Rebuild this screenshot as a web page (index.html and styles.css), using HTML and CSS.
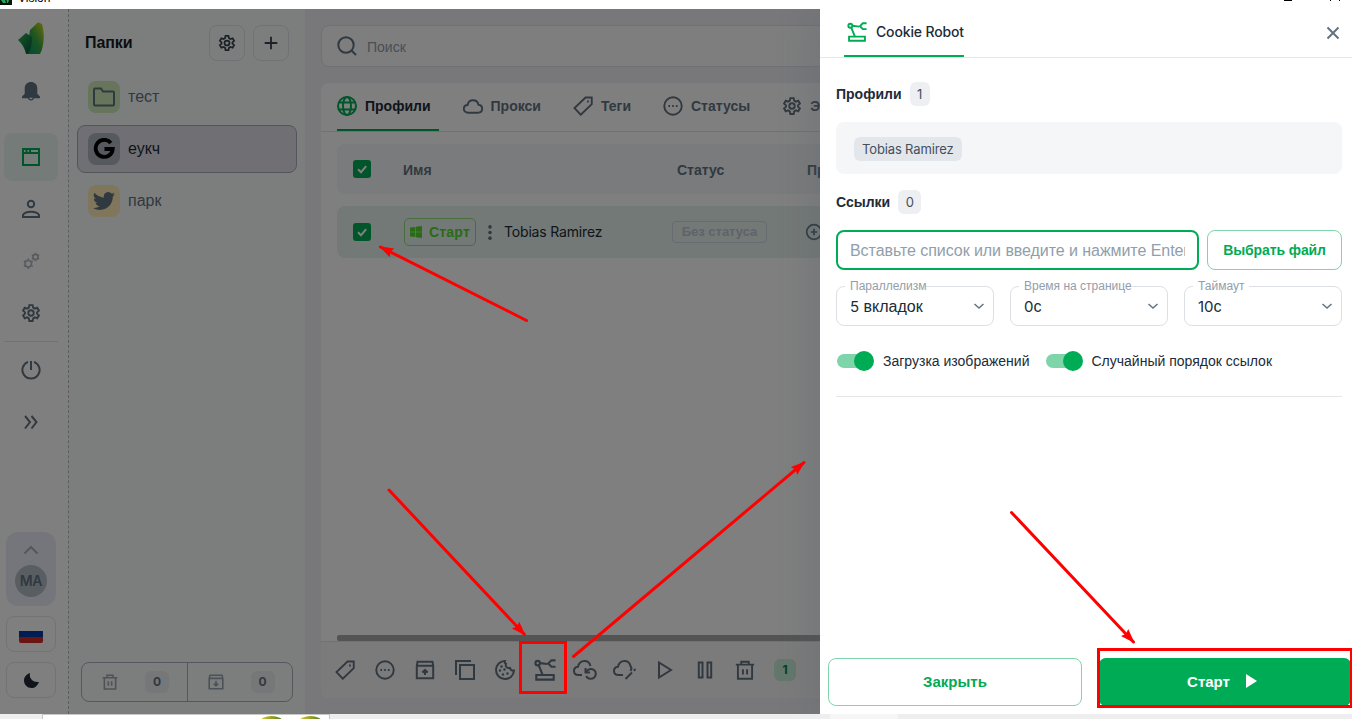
FILE: index.html
```html
<!DOCTYPE html>
<html lang="ru">
<head>
    <meta charset="UTF-8">
    <meta name="viewport" content="width=device-width, initial-scale=1.0">
    <title>Vision</title>
    <link rel="stylesheet" href="styles.css">
</head>
<body>

<svg class="sprite" xmlns="http://www.w3.org/2000/svg">
    <symbol id="gear" viewBox="0 0 24 24"><path d="M10 2.500h4l.6 3 2 1.200 2.900-1 2 3.500-2.300 2v1.600l2.300 2-2 3.500-2.900-1-2 1.200-.6 3h-4l-.6-3-2-1.200-2.900 1-2-3.500 2.300-2v-1.600l-2.300-2 2-3.500 2.900 1 2-1.200z"/><circle cx="12" cy="12" r="3.300"/></symbol>
    <symbol id="dots" viewBox="0 0 24 24"><circle cx="12" cy="12" r="10.500"/><path d="M6.500 12h2M11 12h2M15.500 12h2"/></symbol>
    <symbol id="tag" viewBox="0 0 24 24"><path d="M22.500 1.800h-7.500L1.800 14.500l7.500 8 13.200-12.700z"/><path d="M16.800 6.500h2.200"/></symbol>
    <symbol id="cloud" viewBox="0 0 24 24"><path d="M6.500 20C3 20 1 18 1 15.300c0-2.500 2-4.300 4.500-4.500C6 7.300 8.700 5 12 5c3.500 0 6 2.300 6.500 5.500 2.700.3 4.500 2.200 4.500 4.700 0 2.800-2.100 4.800-5 4.800z"/></symbol>
    <symbol id="robot" viewBox="0 0 24 24"><path d="M2.500 17.500h19v5h-19zM5 6.500l4.500 11M6.500 4.500l8 1M23.500 1.500h-4.500l-3.500 3.500 3.500 3.500h4.500"/><circle cx="4" cy="4.500" r="2.400"/></symbol>
    <symbol id="trash" viewBox="0 0 24 24"><path d="M1 5.500h22M7.500 5V2h9v3M3.500 5.500v17h17v-17M9.500 11v6.500M14.500 11v6.500"/></symbol>
    <symbol id="check" viewBox="0 0 18 18"><path d="M5 9.200l3 3 5.200-6"/></symbol>
    <symbol id="down" viewBox="0 0 12 12"><path d="M1.500 4L6 8l4.500-4"/></symbol>
</svg>

<header class="titlebar">
    <svg class="app-icon" viewBox="0 0 12 12"><rect width="12" height="12" fill="#0b130d"/><path d="M1 7h4l1 3H3zM6 5h3v2L8 10H7z" fill="#22ab5c"/></svg>
    <span class="app-name">Vision</span>
    <span class="win-min"></span>
    <span class="win-close"></span>
</header>

<div class="window">
    <nav class="sidebar">
        <svg class="logo" viewBox="0 0 26 33">
            <defs>
                <linearGradient id="g1" x1="0" y1="1" x2="1" y2="0"><stop offset="0" stop-color="#009078"/><stop offset=".5" stop-color="#36a843"/><stop offset="1" stop-color="#d8d81c"/></linearGradient>
                <linearGradient id="g2" x1="0" y1="0" x2="1" y2="1"><stop offset="0" stop-color="#30b050"/><stop offset="1" stop-color="#00563a"/></linearGradient>
            </defs>
            <path d="M12 8L20 .3 24 2c3 10 2 23-2 30H8z" fill="url(#g1)"/>
            <path d="M0 18l8-7 6 4c0 7-1 12-4 17H8C7 27 5 23 0 18z" fill="url(#g2)"/>
        </svg>
        <div class="nav-item bell">
            <svg class="icon solid" viewBox="0 0 20 22"><path d="M10 1c4 0 7 2.700 7 7v6l3 3v2H0v-2l3-3V8c0-4.300 3-7 7-7z"/><path d="M6.500 18a3.500 3.500 0 007 0z"/><path class="hole" d="M8.200 18.500a1.800 1.800 0 003.600 0z"/></svg>
        </div>
        <div class="nav-item active">
            <svg class="icon" viewBox="0 0 20 20"><path d="M2 2h16v16H2zM2 6h16M5.500 2v4M9 2v4"/></svg>
        </div>
        <div class="nav-item">
            <svg class="icon" viewBox="0 0 20 20"><circle cx="10" cy="5" r="3.200"/><path d="M2 18v-2c2-4.500 14-4.500 16 0v2z"/></svg>
        </div>
        <div class="nav-item faded">
            <svg class="icon pair" viewBox="0 0 20 20"><circle cx="7" cy="13" r="3.600"/><circle cx="15" cy="5.500" r="2.800"/><path d="M7 7.200v2.200M7 16.600v2.200M2 10l2 1.200M10 14.800l2 1.200M2 16l2-1.200M10 11.200l2-1.200M15 .8v1.900M15 8.300v1.900M11 3.200l1.600.9M17.400 6.900l1.600.9M11 7.800l1.600-.9M17.400 4.100l1.600-.9"/></svg>
        </div>
        <div class="nav-item"><svg class="icon sym"><use href="#gear"/></svg></div>
        <div class="nav-line"></div>
        <div class="nav-item">
            <svg class="icon" viewBox="0 0 20 20"><path d="M7 1.900a8.600 8.600 0 106 0M10 1v9"/></svg>
        </div>
        <div class="nav-item">
            <svg class="icon" viewBox="0 0 20 20"><path d="M4 4l5 6-5 6.500M10.500 4l5 6-5 6.500"/></svg>
        </div>
        <div class="nav-bottom">
            <div class="user">
                <svg viewBox="0 0 16 10"><path d="M1.500 8.500L8 2l6.500 6.500"/></svg>
                <div class="avatar">MA</div>
            </div>
            <div class="square"><div class="flag"></div></div>
            <div class="square"><svg class="moon" viewBox="0 0 16 16"><path d="M6.500 0C5 5 9 10.500 16 9.500 14.500 13.500 11.500 16 8 16c-4.500 0-8-3.500-8-8 0-3.600 2.500-6.800 6.500-8z"/></svg></div>
        </div>
    </nav>

    <aside class="folders">
        <div class="folders-head">
            <h2>Папки</h2>
            <button class="icon-btn"><svg class="icon sym dark"><use href="#gear"/></svg></button>
            <button class="icon-btn"><svg class="icon dark" viewBox="0 0 20 20"><path d="M10 3v14M3 10h14"/></svg></button>
        </div>
        <div class="folder">
            <span class="folder-icon lime"><svg class="icon" viewBox="0 0 24 24"><path d="M2 19.500v-15q0-1 1-1h6l2 3h10q1 0 1 1v12q0 1-1 1H3q-1 0-1-1z"/></svg></span>
            тест
        </div>
        <div class="folder selected">
            <span class="folder-icon steel"><svg class="google" viewBox="0 0 24 24"><path d="M19.500 5.500A9.300 9.300 0 1021.500 12H12.500"/></svg></span>
            еукч
        </div>
        <div class="folder">
            <span class="folder-icon sand"><svg class="bird" viewBox="0 0 24 24"><path d="M24 4.600a10 10 0 01-2.800.8 4.900 4.900 0 002.200-2.700c-1 .6-2 1-3.100 1.200a4.900 4.900 0 00-8.400 4.500C7.700 8.100 4.100 6.100 1.700 3.100a4.900 4.900 0 001.500 6.600c-.8 0-1.600-.2-2.200-.6v.1a4.900 4.900 0 004 4.800c-.7.200-1.500.2-2.200.1.600 2 2.400 3.400 4.600 3.400A9.900 9.900 0 010 19.500 14 14 0 007.600 21.700c9 0 14-7.500 14-14v-.6A10 10 0 0024 4.600z"/></svg></span>
            парк
        </div>
        <div class="folders-foot">
            <div><svg class="icon sym"><use href="#trash"/></svg><b>0</b></div>
            <div><svg class="icon" viewBox="0 0 20 20"><path d="M2.500 1.500h15l1 4v13h-17v-13zM2 5.500h16M10 8.500v6M7.300 12l2.700 2.700 2.700-2.700"/></svg><b>0</b></div>
        </div>
    </aside>

    <main class="main">
        <div class="search">
            <svg class="icon" viewBox="0 0 20 20"><circle cx="9" cy="9" r="7.700"/><path d="M14.500 14.500l4.500 4.500"/></svg>
            <span>Поиск</span>
        </div>
        <section class="card">
            <div class="tabs">
                <div class="tab current"><svg class="icon" viewBox="0 0 20 20"><circle cx="10" cy="10" r="9"/><ellipse cx="10" cy="10" rx="4" ry="9"/><path d="M2 6.500h16M2 13.500h16"/></svg>Профили</div>
                <div class="tab"><svg class="icon sym"><use href="#cloud"/></svg>Прокси</div>
                <div class="tab"><svg class="icon sym"><use href="#tag"/></svg>Теги</div>
                <div class="tab"><svg class="icon sym"><use href="#dots"/></svg>Статусы</div>
                <div class="tab"><svg class="icon sym"><use href="#gear"/></svg>Экспорт</div>
            </div>
            <div class="table">
                <div class="row head">
                    <span class="checkbox"><svg><use href="#check"/></svg></span>
                    <span class="col-name">Имя</span>
                    <span class="col-status">Статус</span>
                    <span class="col-proxy">Прокси</span>
                </div>
                <div class="row">
                    <span class="checkbox"><svg><use href="#check"/></svg></span>
                    <div class="col-name">
                        <button class="run"><svg viewBox="0 0 12 12"><path d="M0 1.600l5.400-.7v4.800H0zM6 .8L12 0v5.700H6zM0 6.300h5.400v4.800L0 10.400zM6 6.300h6V12l-6-.8z"/></svg>Старт</button>
                        <svg class="kebab" viewBox="0 0 4 16"><circle cx="2" cy="2" r="1.900"/><circle cx="2" cy="8" r="1.900"/><circle cx="2" cy="14" r="1.900"/></svg>
                        <span class="name">Tobias Ramirez</span>
                    </div>
                    <div class="col-status"><span class="no-status">Без статуса</span></div>
                    <div class="col-proxy"><svg class="icon add" viewBox="0 0 16 16"><circle cx="8" cy="8" r="6.500"/><path d="M8 5.200v5.600M5.200 8h5.600"/></svg></div>
                </div>
            </div>
            <div class="scrollbar"></div>
            <div class="toolbar">
                <span><svg class="icon sym"><use href="#tag"/></svg></span>
                <span><svg class="icon sym"><use href="#dots"/></svg></span>
                <span><svg class="icon" viewBox="0 0 20 20"><path d="M2.500 1.800h15l.7 4v12.400H1.800V5.800zM2 5.800h16M10 15v-4.500M7.300 12.500L10 9.800l2.700 2.700"/></svg></span>
                <span><svg class="icon" viewBox="0 0 20 20"><path d="M5 5h14v14H5zM1 15V1h15"/></svg></span>
                <span><svg class="icon" viewBox="0 0 20 20"><path d="M10 1a9 9 0 109 9.500c-2 .5-3.500-.5-4-2.500-3 .5-5-1.500-4-4-1-.5-1.500-1.500-1-3z"/><path class="chips" d="M6.500 6.500v.01M5 10.500v.01M9.500 9.500v.01M8 14.500v.01M12.500 13.500v.01"/></svg></span>
                <span><svg class="icon sym arm"><use href="#robot"/></svg></span>
                <span><svg class="icon wide" viewBox="0 0 24 20"><path d="M9 15H5.500C3 15 1 13.500 1 11s2-4 4-4.200C5.700 3.500 8.200 1 11.500 1c3 0 5.300 2 6 5M12.500 8v4.500h4.500M13 12C14.500 9.500 16.500 8.700 18.500 9c3 .6 4.500 3 4.200 5.500-.4 2.500-2.500 4.500-5.200 4.300-2-.1-3.500-1.200-4.300-2.800"/></svg></span>
                <span><svg class="icon wide" viewBox="0 0 24 20"><path d="M10 15H5.500C3 15 1 13.500 1 11s2-4 4-4.200C5.700 3.500 8.200 1 11.500 1c3.200 0 5.300 2 6 5 1.300 1.500 1 3.500 0 5M12.500 19l6.500-6.500M20.800 10.700l1.700-1.700"/></svg></span>
                <span><svg class="icon" viewBox="0 0 20 20"><path d="M4 2.500v15L16 10z"/></svg></span>
                <span><svg class="icon" viewBox="0 0 20 20"><path d="M3.800 2.500h3.700v15H3.800zM12.500 2.500h3.700v15h-3.700z"/></svg></span>
                <span><svg class="icon sym"><use href="#trash"/></svg></span>
                <b>1</b>
            </div>
        </section>
    </main>

    <div class="backdrop"></div>

    <div class="drawer">
        <div class="drawer-head">
            <div class="drawer-tab"><svg class="icon sym"><use href="#robot"/></svg><span>Cookie Robot</span></div>
            <svg class="icon close" viewBox="0 0 14 14"><path d="M1.500 1.500l11 11M12.500 1.500l-11 11"/></svg>
        </div>
        <div class="drawer-body">
            <h3>Профили <span>1</span></h3>
            <div class="profiles"><span>Tobias Ramirez</span></div>
            <h3>Ссылки <span>0</span></h3>
            <div class="links">
                <div class="input"><span>Вставьте список или введите и нажмите Enter</span></div>
                <button class="file">Выбрать файл</button>
            </div>
            <div class="selects">
                <div class="select"><label class="wide-label">Параллелизм</label><span><i>5</i> вкладок</span><svg class="icon"><use href="#down"/></svg></div>
                <div class="select"><label class="wide-label">Время на странице</label><span><i>0</i>с</span><svg class="icon"><use href="#down"/></svg></div>
                <div class="select"><label>Таймаут</label><span><i>10</i>с</span><svg class="icon"><use href="#down"/></svg></div>
            </div>
            <div class="switches">
                <div class="switch"><span class="track"></span>Загрузка изображений</div>
                <div class="switch"><span class="track"></span>Случайный порядок ссылок</div>
            </div>
        </div>
        <div class="drawer-foot">
            <button class="cancel">Закрыть</button>
            <button class="start">Старт <svg viewBox="0 0 11 14"><path d="M0 0l11 7-11 7z"/></svg></button>
        </div>
    </div>
</div>

<footer class="taskbar">
    <div class="preview"><span></span><span></span></div>
    <div class="task"></div>
</footer>

<!-- step markers -->
<svg class="marks" viewBox="0 0 1352 719">
    <defs>
        <marker id="head" markerUnits="userSpaceOnUse" markerWidth="16" markerHeight="12" refX="13" refY="5" orient="auto"><path d="M0 0l14.500 5L0 10l2-5z"/></marker>
    </defs>
    <path d="M526.500 320.500L380.500 247"/>
    <path d="M389 490L524.500 634.500"/>
    <path d="M573.500 656.500L804 462.500"/>
    <path d="M1011.500 512.500L1133.500 642"/>
    <rect x="520.500" y="642.500" width="45" height="50"/>
    <rect x="1098.500" y="649.500" width="253" height="57"/>
</svg>

</body>
</html>
```
FILE: styles.css
```css
* {
    box-sizing: border-box;
}
body {
    margin: 0;
    width: 1352px;
    height: 719px;
    overflow: hidden;
    background: #fff;
    font-family: "Liberation Sans", Arial, sans-serif;
    font-size: 14px;
    color: #212b36;
}
h2, h3 {
    margin: 0;
}
button {
    font-family: inherit;
    background: none;
    padding: 0;
    display: flex;
    align-items: center;
    justify-content: center;
}
.sprite {
    display: none;
}
.icon {
    width: 20px;
    height: 20px;
    flex-shrink: 0;
    fill: none;
    stroke: #637381;
    stroke-width: 2;
}
/* sprite icons use a 24 unit box */
.sym {
    stroke-width: 2.3;
}

/* title bar */
.titlebar {
    height: 9px;
    display: flex;
    overflow: hidden;
}
.app-icon {
    width: 12px;
    height: 12px;
    margin-top: -7px;
}
.app-name {
    margin: -9px 0 0 6px;
    font-size: 12px;
    line-height: 14px;
    flex: 1;
    color: #000;
}
.win-min {
    width: 8px;
    height: 1px;
    background: #000;
    margin-right: 38px;
}
.win-close {
    width: 10px;
    height: 1px;
    border: solid #000;
    border-width: 0 1px;
    margin-right: 12px;
}

.window {
    position: relative;
    display: flex;
    width: 1352px;
    height: 705px;
    overflow: hidden;
}

/* sidebar */
.sidebar {
    width: 69px;
    padding: 13px 10px 16px 4px;
    display: flex;
    flex-direction: column;
    border-right: 1px dashed #b4bcc6;
    background: #fff;
}
.logo {
    width: 26px;
    height: 33px;
    margin-left: 14px;
}
.nav-item {
    height: 48px;
    margin-bottom: 4px;
    border-radius: 8px;
    display: flex;
    align-items: center;
    justify-content: center;
    flex-shrink: 0;
}
.bell {
    margin: 12px 0 18px;
}
.bell .icon {
    width: 18px;
}
.solid {
    fill: #637381;
    stroke: none;
}
.hole {
    fill: #fff;
}
.active {
    background: #ebf6f1;
}
.active .icon {
    stroke: #00ab55;
}
.faded {
    opacity: .5;
}
.pair {
    width: 18px;
    stroke-width: 1.8;
}
.nav-line {
    height: 1px;
    background: #dfe3e8;
    margin-bottom: 4px;
}
.nav-bottom {
    margin: auto 2px 0;
    width: 50px;
}
.user {
    height: 74px;
    border-radius: 12px;
    background: #ebedf7;
    display: flex;
    flex-direction: column;
    align-items: center;
    padding-top: 13px;
}
.user > svg {
    width: 16px;
    height: 10px;
    fill: none;
    stroke: #a8b0ba;
    stroke-width: 2.2;
}
.avatar {
    width: 32px;
    height: 32px;
    margin-top: 10px;
    border-radius: 50%;
    background: #b3bcc4;
    color: #637381;
    font: 600 14px/32px Inter, sans-serif;
    letter-spacing: -.3px;
    text-align: center;
}
.square {
    height: 36px;
    margin-top: 10px;
    border: 1px solid #e3e6ea;
    border-radius: 8px;
    display: flex;
    align-items: center;
    justify-content: center;
}
.flag {
    width: 24px;
    height: 18px;
    border-radius: 2px;
    background: linear-gradient(#fff 33%, #0039a6 33% 67%, #d52b1e 67%);
}
.moon {
    width: 15px;
    height: 15px;
    fill: #212b36;
}

/* folders */
.folders {
    width: 236px;
    background: #f9fcfa;
    padding: 16px 8px 12px;
    display: flex;
    flex-direction: column;
}
.folders-head {
    display: flex;
    gap: 8px;
    padding: 0 8px;
    margin-bottom: 12px;
}
.folders-head h2 {
    flex: 1;
    font-size: 16px;
    line-height: 35px;
    letter-spacing: -.1px;
    color: #161c24;
}
.icon-btn {
    width: 36px;
    height: 36px;
    border: 1px solid #dfe3e8;
    border-radius: 8px;
}
.icon-btn .icon {
    width: 18px;
    height: 18px;
}
.dark {
    stroke: #38424e;
}
.folder {
    height: 48px;
    width: 220px;
    margin-bottom: 4px;
    padding: 0 10px;
    border: 1px solid transparent;
    border-radius: 8px;
    display: flex;
    align-items: center;
    gap: 8px;
    font-size: 16px;
    color: #637381;
}
.selected {
    background: #e0e1e8;
    border-color: #aaabb8;
    color: #212b36;
}
.folder-icon {
    width: 32px;
    height: 32px;
    border-radius: 8px;
    display: flex;
    align-items: center;
    justify-content: center;
}
.folder-icon .icon {
    width: 24px;
    height: 24px;
}
.lime { background: #cdebb9; }
.steel { background: #acb4be; }
.sand { background: #ffecb8; }
.google {
    width: 22px;
    height: 22px;
    fill: none;
    stroke: #000;
    stroke-width: 4.2;
}
.bird {
    width: 22px;
    fill: #637381;
}
.folders-foot {
    display: flex;
    height: 40px;
    width: 212px;
    margin: auto 4px 0;
    border: 1px solid #a9b1bb;
    border-radius: 8px;
}
.folders-foot div {
    flex: 1;
    display: flex;
    align-items: center;
    gap: 27px;
    padding-left: 20px;
}
.folders-foot div + div {
    border-left: 1px solid #a9b1bb;
}
.folders-foot .icon {
    width: 16px;
    height: 16px;
}
.folders-foot .icon {
    stroke: #9aa5b0;
}
.folders-foot b {
    width: 24px;
    background: #edeef2;
    border-radius: 6px;
    color: #637381;
    font: 700 12px/22px Inter, sans-serif;
    text-align: center;
}

/* main area */
.main {
    flex: 1;
    padding: 16px 0 16px 16px;
    background: #f0f1f6;
    display: flex;
    flex-direction: column;
}
.search {
    height: 42px;
    width: 1040px;
    flex-shrink: 0;
    border: 1px solid #dfe3e8;
    border-radius: 8px;
    background: #fcfcfc;
    display: flex;
    align-items: center;
    gap: 10px;
    padding-left: 15px;
    color: #919eab;
}
.search span {
    padding-top: 2px;
}
.card {
    flex: 1;
    width: 1040px;
    margin-top: 16px;
    background: #fff;
    border-radius: 8px;
    display: flex;
    flex-direction: column;
}
.tabs {
    height: 49px;
    padding-left: 16px;
    border-bottom: 1px solid #dfe3e8;
    display: flex;
    gap: 24px;
}
.tab {
    height: 48px;
    display: flex;
    align-items: center;
    gap: 8px;
    padding-right: 8px;
    font-weight: bold;
    color: #637381;
    border-bottom: 2px solid transparent;
}
.tab.current {
    color: #212b36;
    border-color: #00ab55;
}
.current .icon {
    stroke: #00ab55;
}
.table {
    padding: 12px 0 0 16px;
    display: flex;
    flex-direction: column;
    gap: 12px;
}
.row {
    height: 52px;
    padding-left: 16px;
    border-radius: 8px 0 0 8px;
    background: #e6f3ed;
    display: flex;
    align-items: center;
}
.row.head {
    height: 50px;
    background: #f4f6f8;
    font-weight: bold;
    color: #637381;
}
.head span {
    padding-top: 2px;
}
.head .checkbox {
    padding: 0;
}
.checkbox {
    width: 18px;
    height: 18px;
    border-radius: 3px;
    background: #00ab55;
    margin-right: 33px;
}
.checkbox svg {
    display: block;
    width: 18px;
    height: 18px;
    fill: none;
    stroke: #fff;
    stroke-width: 2;
}
.col-name {
    width: 268px;
    display: flex;
    align-items: center;
}
.head .col-name {
    width: 274px;
    margin-left: -1px;
}
.col-status {
    width: 133px;
}
.head .col-status {
    width: 130px;
}
.run {
    width: 72px;
    height: 28px;
    gap: 7px;
    border: 1px solid #90dc78;
    border-radius: 5px;
    color: #54d62c;
    font-size: 14px;
    font-weight: bold;
    letter-spacing: .2px;
}
.run svg {
    width: 12px;
    fill: #54d62c;
}
.kebab {
    width: 4px;
    height: 15px;
    margin: 0 12px;
    fill: #637381;
}
.name {
    padding-bottom: 1px;
    font-family: Inter, sans-serif;
    font-size: 14px;
    letter-spacing: -.17px;
    color: #212b36;
}
.no-status {
    display: inline-block;
    width: 95px;
    border: 1px solid #d0d6e0;
    border-radius: 4px;
    color: #bec6d4;
    font-size: 13px;
    font-weight: bold;
    line-height: 20px;
    text-align: center;
}
.add {
    width: 18px;
    height: 18px;
    stroke-width: 1.5;
    display: block;
}
.scrollbar {
    height: 6px;
    margin: auto 0 0 16px;
    background: #a8a8a8;
    border-radius: 2px;
}
.toolbar {
    height: 57px;
    padding-left: 4px;
    border-top: 1px solid #dfe3e8;
    border-radius: 0 0 8px 8px;
    background: #f7f7f7;
    display: flex;
    align-items: center;
}
.toolbar span {
    width: 40px;
    display: flex;
    justify-content: center;
}
.toolbar .wide {
    width: 24px;
}
.toolbar .arm {
    width: 22px;
    height: 22px;
}
.chips {
    stroke-linecap: round;
    stroke-width: 2.6;
}
.toolbar b {
    width: 22px;
    margin-left: 9px;
    background: #c8eeda;
    border-radius: 6px;
    color: #007b55;
    font: 700 12px/22px Inter, sans-serif;
    text-align: center;
}

.backdrop {
    position: absolute;
    inset: 0;
    background: rgba(0, 0, 0, .5);
}

/* cookie robot drawer */
.drawer {
    position: absolute;
    top: 0;
    right: 0;
    width: 532px;
    height: 705px;
    background: #fff;
    box-shadow: -10px 0 30px rgba(80, 90, 105, .22);
    display: flex;
    flex-direction: column;
}
.drawer-head {
    height: 49px;
    border-bottom: 1px solid #e5e8eb;
    padding: 0 12px 0 24px;
    display: flex;
    justify-content: space-between;
    align-items: center;
}
.drawer-tab {
    height: 48px;
    width: 120px;
    padding-left: 3px;
    border-bottom: 2px solid #00ab55;
    display: flex;
    align-items: center;
    gap: 9px;
    font: 500 14px Inter, sans-serif;
    letter-spacing: -.15px;
    white-space: nowrap;
}
.drawer-tab span {
    padding-bottom: 2px;
}
.drawer-tab .icon {
    stroke: #00ab55;
}
.drawer-head .close {
    width: 14px;
    height: 14px;
}
.drawer-body {
    flex: 1;
    padding: 24px 10px 0 16px;
}
h3 {
    height: 24px;
    display: flex;
    gap: 8px;
    font-size: 14px;
    line-height: 24px;
}
h3 span {
    padding: 0 7.5px;
    border-radius: 6px;
    background: #edeff2;
    font: 400 13px/24px Inter, sans-serif;
    color: #454f5b;
}
.profiles {
    height: 52px;
    margin: 16px 0;
    padding: 15px 18px;
    border-radius: 8px;
    background: #f4f6f8;
}
.profiles span {
    display: inline-block;
    padding: 0 8px;
    border-radius: 6px;
    background: #e3e6eb;
    font: 400 13px/24px Inter, sans-serif;
    letter-spacing: -.14px;
    color: #454f5b;
}
.links {
    display: flex;
    gap: 8px;
    margin: 16px 0;
}
.input {
    width: 363px;
    height: 40px;
    padding: 0 12px;
    border: 2px solid #00ab55;
    border-radius: 8px;
    font-size: 16px;
    line-height: 37px;
    letter-spacing: -.06px;
    color: #919eab;
}
.input span {
    display: block;
    overflow: hidden;
    white-space: nowrap;
}
.file {
    flex: 1;
    border: 1px solid #7fd5aa;
    border-radius: 8px;
    color: #00ab55;
    font-size: 14px;
    font-weight: bold;
    letter-spacing: -.1px;
}
.selects {
    display: grid;
    grid-template-columns: repeat(3, 158px);
    gap: 16px;
}
.select {
    position: relative;
    height: 40px;
    padding: 0 8px 0 13px;
    border: 1px solid #dce0e4;
    border-radius: 8px;
    display: flex;
    align-items: center;
    justify-content: space-between;
    font-size: 16px;
}
.select label {
    position: absolute;
    top: -8px;
    left: 8px;
    padding: 0 5px;
    background: #fff;
    font-size: 12px;
    line-height: 14px;
    color: #919eab;
    white-space: nowrap;
}
.select .wide-label {
    padding-right: 0;
}
.select i {
    font: 400 15px Inter, sans-serif;
}
.select .icon {
    width: 12px;
    height: 12px;
    stroke-width: 1.5;
}
.switches {
    display: flex;
    gap: 16px;
    height: 71px;
    padding: 0 1px;
    align-items: center;
    border-bottom: 1px solid #e5e8eb;
}
.switch {
    display: flex;
    align-items: center;
    gap: 12px;
}
.track {
    width: 34px;
    height: 14px;
    border-radius: 7px;
    background: #7fd5aa;
    display: flex;
    align-items: center;
    justify-content: flex-end;
}
.track::after {
    content: "";
    width: 20px;
    height: 20px;
    margin-right: -3px;
    border-radius: 50%;
    background: #00ab55;
}
.drawer-foot {
    display: flex;
    gap: 16px;
    padding: 0 0 8px 8px;
}
.drawer-foot button {
    width: 254px;
    height: 48px;
    padding-bottom: 2px;
    border: 1px solid #7fd5aa;
    border-radius: 8px;
    color: #00ab55;
    font-size: 15px;
    font-weight: bold;
}
.drawer-foot .start {
    background: #00ab55;
    border-color: #00ab55;
    color: #fff;
    gap: 16px;
    padding-right: 6px;
}
.start svg {
    width: 11px;
    height: 14px;
    fill: #fff;
}

/* strip below the window */
.taskbar {
    height: 5px;
    background: #eee;
    display: flex;
    overflow: hidden;
}
.preview {
    width: 288px;
    margin-left: 42px;
    padding: 1px 7px 0 0;
    border: 1px solid #c8c8c8;
    border-bottom: none;
    background: #fff;
    display: flex;
    justify-content: flex-end;
    gap: 16px;
}
.preview span {
    width: 23px;
    height: 12px;
    border-radius: 50%;
    background: linear-gradient(90deg, #d8c832, #8a9a20 60%, #4a8030);
}
.task {
    width: 68px;
    margin-left: 500px;
    background: #f6f6f6;
}

.marks {
    position: absolute;
    top: 0;
    left: 0;
    width: 1352px;
    height: 719px;
    fill: none;
    stroke: #f00;
    stroke-width: 3;
}
.marks path {
    marker-end: url(#head);
    stroke-linecap: round;
}
.marks marker path {
    marker-end: none;
    fill: #f00;
    stroke: none;
}
```
